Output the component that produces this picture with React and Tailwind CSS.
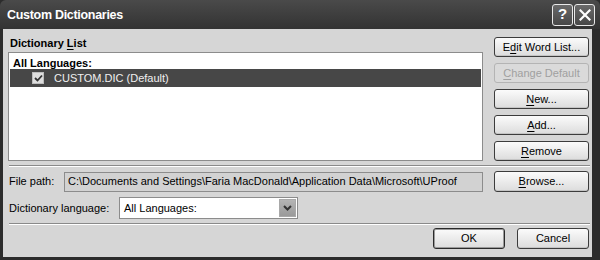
import { useState } from "react";

const FONT = { fontFamily: '"Liberation Sans", Arial, sans-serif' };

/* ----------------------------------
   XP-style push button
-----------------------------------*/
function Btn({ children, disabled, className = "" }) {
  return (
    <button
      disabled={disabled}
      className={
        "flex items-center justify-center rounded-[3px] border text-[11px] leading-none " +
        (disabled
          ? "border-[#b4b4b4] bg-[#dadada] text-[#a0a0a0] "
          : "border-[#3c3c3c] bg-gradient-to-b from-[#fbfbfb] to-[#dcdcdc] text-black shadow-[inset_0_-1px_0_#c4c4c4] ") +
        className
      }
    >
      {children}
    </button>
  );
}

function U({ children }) {
  return <span className="underline underline-offset-2">{children}</span>;
}

function Separator() {
  return <div className="ml-[6px] mr-[2px] h-[2px] border-t border-[#8a8a8a] border-b border-b-white" />;
}

export default function App() {
  const [checked, setChecked] = useState(true);
  const [language, setLanguage] = useState("All Languages:");

  return (
    <div className="w-[600px] h-[260px] bg-[#2c2c2c] flex flex-col" style={FONT}>
      {/* TITLE BAR */}
      <div className="h-[29px] flex items-center pl-[7px] pr-[5px] bg-gradient-to-b from-[#4a4a4a] to-[#333333] rounded-t-[6px]">
        <span className="text-white font-bold text-[12.5px] flex-1 tracking-[-0.3px] pt-[2px]">
          Custom Dictionaries
        </span>
        <div className="flex gap-px">
          <div className="w-[21px] h-[22px] rounded-[3px] border border-[#e8e8e8] bg-gradient-to-b from-[#6a6a6a] to-[#474747] flex items-center justify-center text-white font-bold text-[15px]">
            ?
          </div>
          <div className="w-[21px] h-[22px] rounded-[3px] border border-[#e8e8e8] bg-gradient-to-b from-[#6a6a6a] to-[#474747] flex items-center justify-center">
            <svg width="12" height="12" viewBox="0 0 12 12">
              <path d="M1.5 1.5 L10.5 10.5 M10.5 1.5 L1.5 10.5" stroke="white" strokeWidth="2.2" strokeLinecap="square" />
            </svg>
          </div>
        </div>
      </div>

      {/* BODY */}
      <div className="flex-1 ml-[3px] mr-[8px] mb-[3px] bg-[#d6d6d6] flex flex-col">
        {/* DICTIONARY LIST + BUTTONS */}
        <div className="flex items-start pl-[5px] pr-[3px]">
          <div className="flex-1 pt-[7px]">
            <div className="h-[14px] pl-[2px] text-[11px] font-bold leading-[14px]">
              Dictionary <U>L</U>ist
            </div>
            <div className="mt-[2px] h-[109px] border border-[#8c8c8c] bg-white px-px">
              <div className="h-[16px] pt-[3px] pl-[3px] text-[11px] font-bold leading-[14px]">
                All Languages:
              </div>
              <div className="h-[18px] bg-[#474747] flex items-center">
                <button
                  onClick={() => setChecked(!checked)}
                  className="ml-[22px] w-[12px] h-[12px] bg-[#dedede] border border-[#bdbdbd] flex items-center justify-center"
                >
                  {checked && (
                    <svg width="9" height="8" viewBox="0 0 9 8">
                      <path d="M1 4 L3.5 6.5 L8 1.5" stroke="#333" strokeWidth="1.8" fill="none" />
                    </svg>
                  )}
                </button>
                <span className="ml-[10px] text-[11px] text-[#f0f0f0]">CUSTOM.DIC (Default)</span>
              </div>
            </div>
          </div>

          <div className="w-[95px] ml-[11px] pt-[8px] flex flex-col gap-[6px]">
            <Btn className="h-[20px]">E<U>d</U>it Word List...</Btn>
            <Btn className="h-[20px]" disabled>
              <U>C</U>hange Default
            </Btn>
            <Btn className="h-[20px]">
              <U>N</U>ew...
            </Btn>
            <Btn className="h-[20px]">
              <U>A</U>dd...
            </Btn>
            <Btn className="h-[20px]">
              <U>R</U>emove
            </Btn>
          </div>
        </div>

        <div className="mt-[4px]">
          <Separator />
        </div>

        {/* FILE PATH */}
        <div className="mt-[4px] flex items-center pl-[6px] pr-[3px]">
          <span className="w-[55px] text-[11px]">File path:</span>
          <div className="flex-1 h-[20px] border border-[#8c8c8c] bg-[#d2d2d2] flex items-center pl-[3px] text-[11px] whitespace-nowrap overflow-hidden">
            C:\Documents and Settings\Faria MacDonald\Application Data\Microsoft\UProof
          </div>
          <Btn className="w-[95px] ml-[11px] h-[21px]">
            <U>B</U>rowse...
          </Btn>
        </div>

        {/* LANGUAGE */}
        <div className="mt-[5px] flex items-center pl-[6px]">
          <span className="w-[110px] text-[11px]">Dictionary language:</span>
          <div className="w-[179px] h-[22px] border border-[#8c8c8c] bg-white flex items-center">
            <span className="flex-1 pl-[4px] text-[11px]">{language}</span>
            <button
              onClick={() => setLanguage("All Languages:")}
              className="w-[17px] h-[18px] mr-px bg-gradient-to-b from-[#b4b4b4] to-[#9a9a9a] border border-[#a8a8a8] flex items-center justify-center"
            >
              <svg width="9" height="6" viewBox="0 0 9 6">
                <path d="M1 1 L4.5 4.5 L8 1" stroke="#333" strokeWidth="2" fill="none" />
              </svg>
            </button>
          </div>
        </div>

        <div className="mt-[4px]">
          <Separator />
        </div>

        {/* OK / CANCEL */}
        <div className="mt-[3px] flex justify-end gap-[12px] pr-[3px]">
          <Btn className="w-[72px] h-[21px] !border-[#2a2a2a] shadow-[inset_0_0_0_1px_#9a9a9a]">OK</Btn>
          <Btn className="w-[72px] h-[21px]">Cancel</Btn>
        </div>
      </div>
    </div>
  );
}
